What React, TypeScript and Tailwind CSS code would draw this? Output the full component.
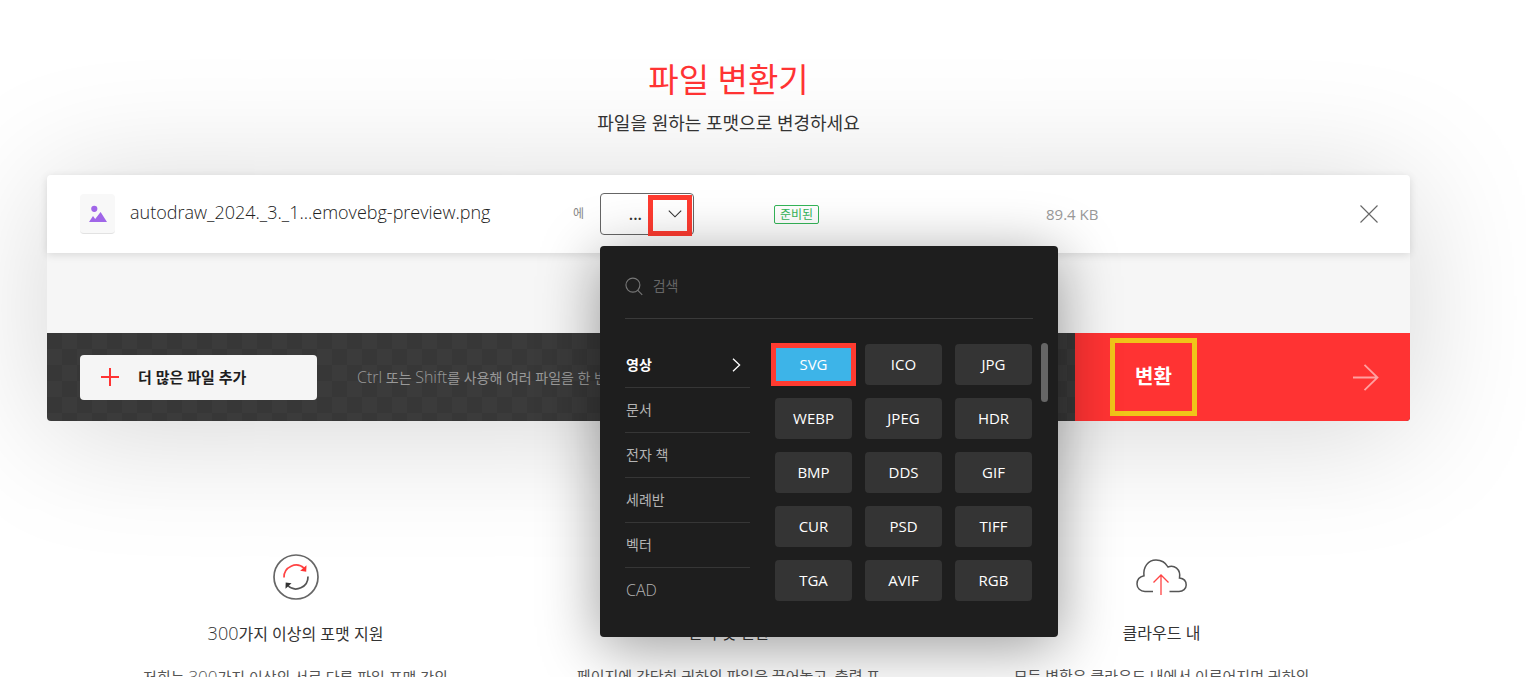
import { ReactNode } from "react";

const categories = ["영상", "문서", "전자 책", "세례반", "벡터", "CAD"];

const formats = [
  "SVG", "ICO", "JPG",
  "WEBP", "JPEG", "HDR",
  "BMP", "DDS", "GIF",
  "CUR", "PSD", "TIFF",
  "TGA", "AVIF", "RGB",
];

function FormatMenu() {
  return (
    <div className="absolute top-full left-0 z-10 mt-[11px] w-[458px] rounded bg-[#1e1e1e] pr-[10px] pb-[25px] pl-[25px] shadow-[0_10px_60px_rgba(0,0,0,0.4)]">
      <label className="mr-[15px] flex h-[73px] items-center gap-2.5 border-b border-[#3a3a3a] pt-2">
        <svg className="h-[19px] w-[19px]" viewBox="0 0 19 19" fill="none" stroke="#777" strokeWidth="1.2">
          <circle cx="8.5" cy="8" r="7.5" />
          <path d="M13.500 13.500 18.500 18.500" />
        </svg>
        <input
          type="text"
          aria-label="검색"
          placeholder="검색"
          className="w-full bg-transparent text-sm text-white outline-none placeholder:text-[#666]"
        />
      </label>

      <div className="mt-6 flex">
        <ul className="w-[125px] shrink-0">
          {categories.map((name, i) => (
            <li key={name} className="border-b border-[#363636] last:border-b-0">
              <button
                type="button"
                className={
                  i === 0
                    ? "flex h-11 w-full items-center justify-between px-px text-sm font-bold text-white"
                    : "flex h-11 w-full items-center px-px text-sm text-[#b4b4b4]"
                }
              >
                <span className={name === "CAD" ? "text-base font-light" : undefined}>{name}</span>
                {i === 0 && (
                  <svg className="mr-2 h-[14px] w-[9px]" viewBox="0 0 9 14" fill="none" stroke="#fff" strokeWidth="1.3">
                    <path d="m1 .8 6.6 6.2L1 13.2" />
                  </svg>
                )}
              </button>
            </li>
          ))}
        </ul>
        <div className="ml-[25px] grid w-[257px] shrink-0 grid-cols-3 content-start gap-[13px] pt-px">
          {formats.map((format, i) => (
            <button
              key={format}
              type="button"
              className={
                i === 0
                  ? "relative h-[41px] rounded bg-[#3db4e8] text-[15px] font-medium text-white"
                  : "h-[41px] rounded bg-[#343434] text-[15px] font-medium text-white"
              }
            >
              {format}
              {i === 0 && <Marker className="-inset-x-1 -inset-y-px border-[#ff3b30]" />}
            </button>
          ))}
        </div>
        <div className="ml-[9px] h-[59px] w-[7px] shrink-0 rounded-full bg-[#666]" />
      </div>
    </div>
  );
}

function Marker({ className }: { className: string }) {
  return <span aria-hidden="true" className={`pointer-events-none absolute border-[5px] ${className}`} />;
}

function Feature({ icon, title, children }: { icon: ReactNode; title: ReactNode; children: ReactNode }) {
  return (
    <section className="flex flex-col items-center text-center">
      <div className="flex h-[50px] items-center">{icon}</div>
      <h2 className="mt-[19px] text-base leading-6 text-[#333]">{title}</h2>
      <p className="mt-[19px] w-[310px] text-[15px] leading-6 whitespace-nowrap text-[#555]">{children}</p>
    </section>
  );
}

export default function App() {
  return (
    <div className="h-screen overflow-hidden bg-white pr-[116px] pl-[47px] font-['Open_Sans','Noto_Sans_CJK_KR',sans-serif] text-[#333]">
      <header className="flex flex-col items-center pt-[55px]">
        <h1 className="text-[33px] leading-[50px] text-[#ff3333]">파일 변환기</h1>
        <p className="mt-1 text-lg leading-7">파일을 원하는 포맷으로 변경하세요</p>
      </header>

      <main>
        <div className="mt-[38px] rounded bg-[#f6f6f6] shadow-[0_10px_130px_rgba(0,0,0,0.17)]">
          <div className="relative grid h-[78px] grid-cols-[520fr_174fr_272fr_332fr] items-center rounded-t bg-white pr-8 pl-[33px] shadow-[0_2px_8px_rgba(0,0,0,0.12)]">
            <div className="flex items-center pr-4">
              <span className="flex h-10 w-[35px] items-center justify-center rounded border-b border-[#e2e2e2] bg-[#f8f8f8]">
                <svg className="h-[18px] w-[18px]" viewBox="0 0 18 18" fill="#a066e8">
                  <circle cx="5.3" cy="3.8" r="3.1" />
                  <path d="M0 17 4 11l2.2 3L11.6 7 18 17Z" />
                </svg>
              </span>
              <span className="ml-[15px] pb-1 text-lg leading-6 font-light text-[#222]">autodraw_2024._3._1...emovebg-preview.png</span>
              <span className="ml-auto text-xs text-[#888]">에</span>
            </div>
            <div className="relative w-[94px]">
              <button
                type="button"
                aria-haspopup="true"
                aria-expanded="true"
                className="flex h-[42px] w-full items-center justify-end rounded border border-[#666] pr-[11px] text-base font-semibold"
              >
                ...
                <svg className="ml-[26px] h-2 w-[14px]" viewBox="0 0 14 8" fill="none" stroke="#333" strokeWidth="1.1">
                  <path d="M.8.6 7 6.800 13.200.6" />
                </svg>
              </button>
              <Marker className="top-0.5 right-0.5 h-[41px] w-11 border-[#ff3b30]" />
              <FormatMenu />
            </div>
            <span className="justify-self-start rounded-xs border border-[#34b558] px-[5px] text-xs leading-[17px] text-[#34b558]">
              준비된
            </span>
            <div className="flex items-center justify-between">
              <span className="text-[15px] text-[#999]">89.4 KB</span>
              <button type="button" aria-label="삭제">
                <svg className="h-[18px] w-[18px]" viewBox="0 0 18 18" stroke="#666" strokeWidth="1.1">
                  <path d="m.5.5 17 17m0-17-17 17" />
                </svg>
              </button>
            </div>
          </div>

          <div className="h-20" />

          <div className="flex h-[88px] overflow-hidden rounded-b bg-[repeating-conic-gradient(#3b3b3b_0_25%,#373737_0_50%)] bg-[length:30px_32px]">
            <div className="flex min-w-0 flex-1 items-center pl-[33px]">
              <button
                type="button"
                className="flex h-[45px] w-[237px] shrink-0 items-center rounded bg-[#f5f5f5] pl-[21px] text-[15px] font-bold text-[#1e1e1e]"
              >
                <svg className="mr-[19px] h-[18px] w-[18px]" viewBox="0 0 18 18" stroke="#ff3333" strokeWidth="2">
                  <path d="M9 0v18M0 9h18" />
                </svg>
                더 많은 파일 추가
              </button>
              <p className="ml-10 text-sm whitespace-nowrap text-[#999]">
                <span className="text-base font-light">Ctrl</span> 또는 <span className="text-base font-light">Shift</span>를
                사용해 여러 파일을 한 번에 추가
              </p>
            </div>
            <button
              type="button"
              className="flex w-[335px] shrink-0 items-center justify-between bg-[#ff3333] pr-[31px] pl-[35px] text-xl font-bold text-white"
            >
              <span className="relative flex h-[78px] w-[87px] items-center justify-center">
                변환
                <Marker className="inset-0 border-[#f0c419]" />
              </span>
              <svg className="h-[27px] w-[26px]" viewBox="0 0 26 27" fill="none" stroke="#ffa0a0" strokeWidth="1.8">
                <path d="M0 13.500h24.500M11.500.8 24.500 13.500l-13 12.700" />
              </svg>
            </button>
          </div>
        </div>

        <div className="mt-[131px] grid grid-cols-3 px-8">
          <Feature
            title={<><span className="text-lg leading-6 font-light">300</span>가지 이상의 포맷 지원</>}
            icon={
              <svg className="h-[46px] w-[46px]" viewBox="0 0 46 46" fill="none" strokeWidth="1.7">
                <circle cx="23" cy="23" r="22" stroke="#666" />
                <path d="M11 23.500A12 12 0 0 1 31.300 14.500" stroke="#ff4444" />
                <path d="m33.500 11.300-.3 6.500-6-1Z" fill="#ff3333" />
                <path d="M35 22.500A12 12 0 0 1 14.700 31.500" stroke="#555" />
                <path d="m12.500 34.800.2-6.300 5.800.8Z" fill="#333" />
              </svg>
            }
          >
            저희는 <span className="text-[17px] font-light">300</span>가지 이상의 서로 다른 파일 포맷 간의
          </Feature>
          <Feature title="선택 및 변환" icon={null}>
            페이지에 간단히 귀하의 파일을 끌어놓고, 출력 포
          </Feature>
          <Feature
            title="클라우드 내"
            icon={
              <svg className="h-9 w-[51px]" viewBox="0 0 51 36" fill="none" stroke="#555" strokeWidth="1.5">
                <path d="M17 32.500H9C4.300 32.500 1 29 1 25c0-4.200 2.800-7.300 7-8.200C7 8 12 1 20 1c5.500 0 9.500 2.500 12 7 6-2.500 13 2 11.500 11 4.200.5 6.700 3.200 6.700 6.900 0 3.700-3.200 6.600-7.200 6.600H33.500" />
                <path d="M25 36V16m-7.500 7.500L25 16l7.500 7.500" stroke="#ff4444" strokeWidth="1.3" />
              </svg>
            }
          >
            모든 변환은 클라우드 내에서 이루어지며 귀하의
          </Feature>
        </div>
      </main>
    </div>
  );
}
